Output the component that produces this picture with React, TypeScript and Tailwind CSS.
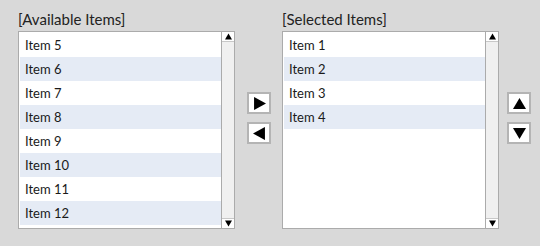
const available = ['Item 5', 'Item 6', 'Item 7', 'Item 8', 'Item 9', 'Item 10', 'Item 11', 'Item 12'];
const selected = ['Item 1', 'Item 2', 'Item 3', 'Item 4'];

function Triangle({ dir, size = 12 }: { dir: 'up' | 'down' | 'left' | 'right'; size?: number }) {
  const points = {
    up: '6,1 12,11 0,11',
    down: '0,1 12,1 6,11',
    right: '1,0 12,6 1,12',
    left: '11,0 0,6 11,12',
  }[dir];
  return (
    <svg width={size} height={size} viewBox="0 0 12 12">
      <polygon points={points} fill="#000" />
    </svg>
  );
}

function ListBox({ label, items }: { label: string; items: string[] }) {
  return (
    <div className="flex flex-col">
      <div className="h-[23px] text-[15px] leading-[23px] text-[#222]">{label}</div>
      <div className="flex h-[198px] w-[217px] border border-[#ababab] bg-white">
        <ul className="flex-1 pt-[1px] pl-[1px]">
          {items.map((item, i) => (
            <li
              key={item}
              className={`h-[24px] pl-[5px] text-[13px] leading-[24px] text-[#1a1a1a] ${i % 2 === 1 ? 'bg-[#e5ebf5]' : 'bg-white'}`}
            >
              {item}
            </li>
          ))}
        </ul>
        <div className="flex w-[13px] flex-col justify-between border-l border-[#ababab] bg-[#f0f0f0]">
          <div className="flex h-[10px] items-center justify-center border-b border-[#c8c8c8] bg-white">
            <Triangle dir="up" size={7} />
          </div>
          <div className="flex h-[10px] items-center justify-center border-t border-[#c8c8c8] bg-white">
            <Triangle dir="down" size={7} />
          </div>
        </div>
      </div>
    </div>
  );
}

function ArrowButton({ dir }: { dir: 'up' | 'down' | 'left' | 'right' }) {
  return (
    <button className="flex h-[22px] w-[24px] items-center justify-center border-2 border-[#b4b4b4] bg-white">
      <Triangle dir={dir} size={13} />
    </button>
  );
}

export default function App() {
  return (
    <div className="flex h-[246px] w-[540px] bg-[#d9d9d9] pt-[8px] pl-[18px] font-['Lato',sans-serif]">
      <ListBox label="[Available Items]" items={available} />
      <div className="mt-[84px] ml-[12px] flex flex-col gap-[8px]">
        <ArrowButton dir="right" />
        <ArrowButton dir="left" />
      </div>
      <div className="ml-[11px]">
        <ListBox label="[Selected Items]" items={selected} />
      </div>
      <div className="mt-[84px] ml-[8px] flex flex-col gap-[8px]">
        <ArrowButton dir="up" />
        <ArrowButton dir="down" />
      </div>
    </div>
  );
}
